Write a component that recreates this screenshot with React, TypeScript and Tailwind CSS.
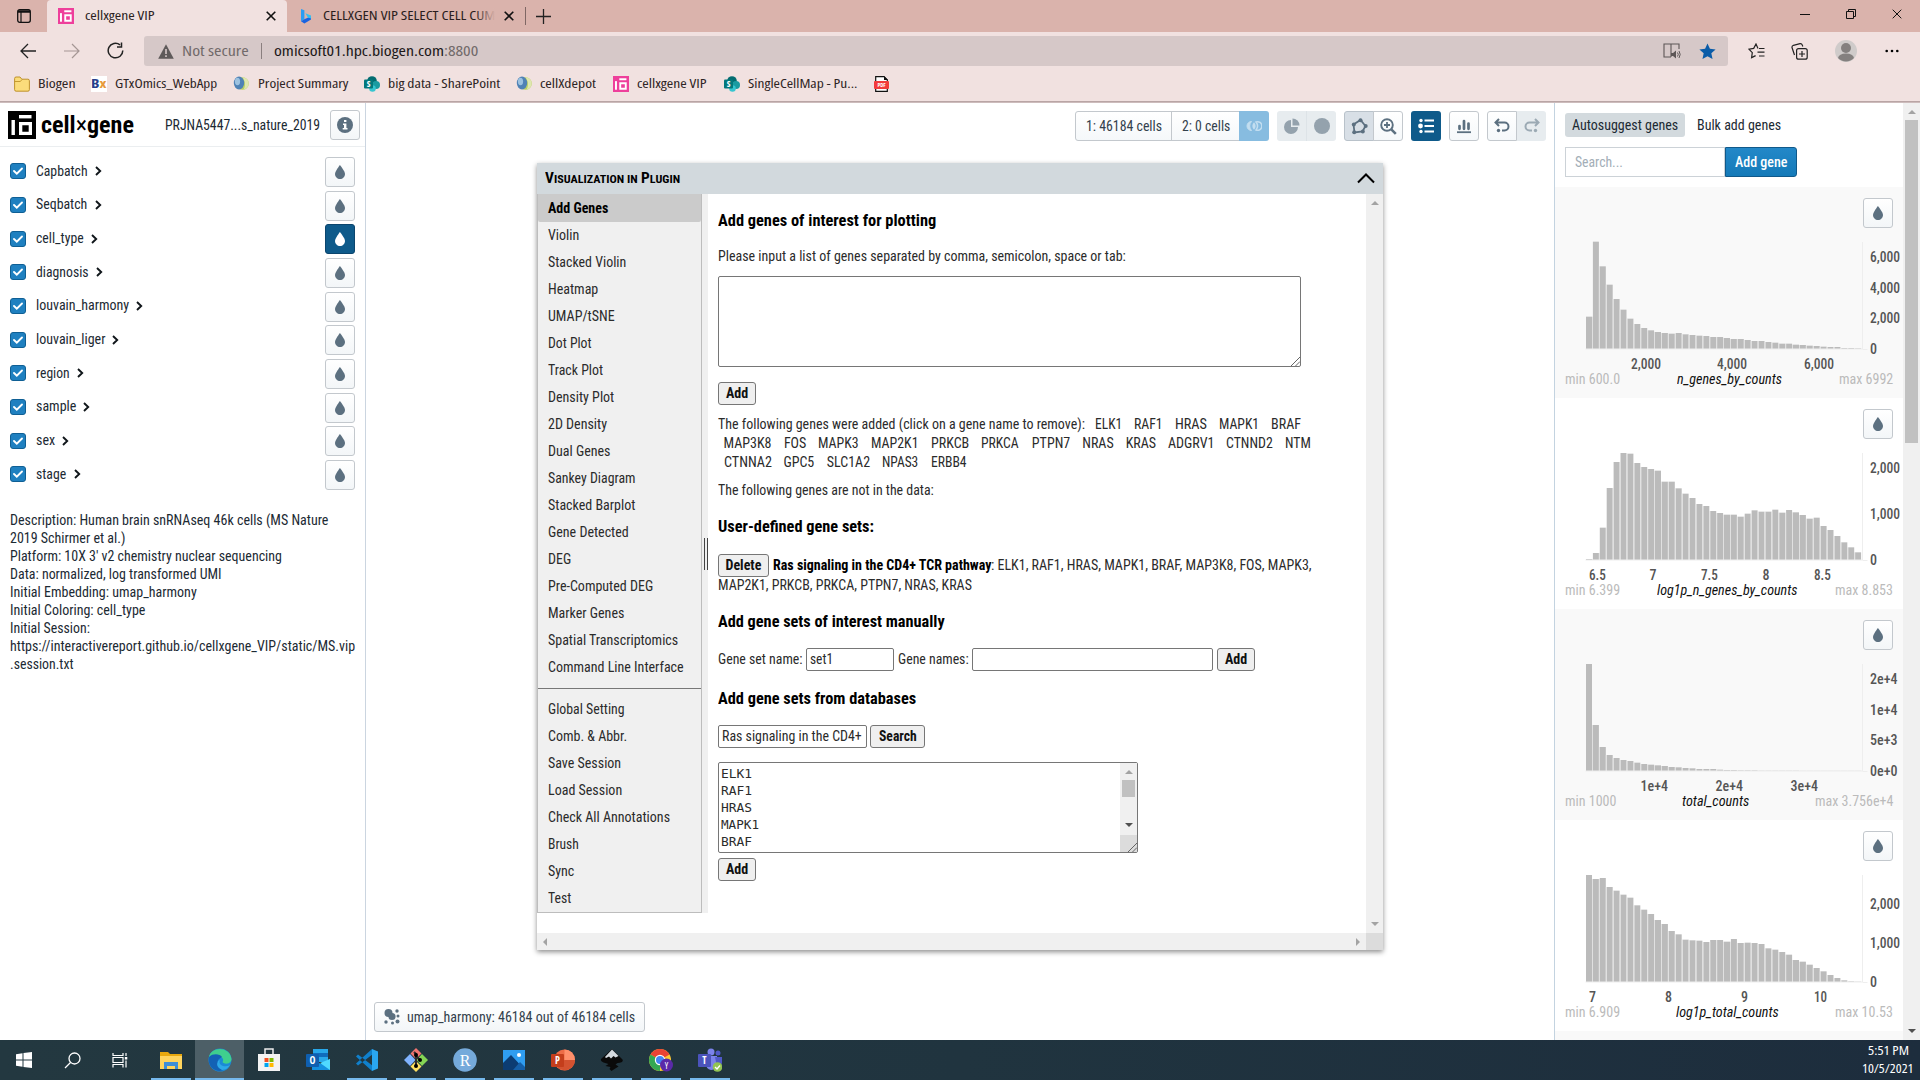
import React, { useLayoutEffect, useRef, useState } from "react";

/* Single line of condensed text that occupies an exact width. */
function T({ w, c = "", children }: { w: number; c?: string; children: React.ReactNode }) {
  const ref = useRef<HTMLSpanElement>(null);
  const [s, setS] = useState(1);
  useLayoutEffect(() => {
    if (ref.current) setS(w / ref.current.offsetWidth);
  }, [w]);
  return (
    <span className={"inline-block shrink-0 whitespace-pre " + c} style={{ width: w }}>
      <span ref={ref} className="inline-block origin-left whitespace-pre" style={{ transform: `scaleX(${s})` }}>
        {children}
      </span>
    </span>
  );
}

const ui = "font-['Open_Sans','Noto_Sans',sans-serif]";

function Logo({ size, h, bg }: { size: number; h?: number; bg: string }) {
  return (
    <svg width={size} height={h ?? size} viewBox="0 0 28 28" preserveAspectRatio="none" className="shrink-0">
      <rect width="28" height="28" fill={bg} />
      <rect x="3.5" y="9" width="3.4" height="15" fill="#fff" />
      <rect x="11" y="4" width="12.5" height="3.4" fill="#fff" />
      <path d="M11 11h13v13H11z M14.3 14.3v6.4h6.4v-6.4z" fill="#fff" fillRule="evenodd" />
    </svg>
  );
}

function Drop({ fill = "#5c7080" }: { fill?: string }) {
  return (
    <svg width="16" height="16" viewBox="0 0 16 16">
      <path fill={fill} d="M7.9 1s-4.9 6.3-4.9 8.9C3 12.7 5.3 15 8 15s5-2.3 5-5.1C13 7.2 7.9 1 7.9 1z" />
    </svg>
  );
}

const btn = "flex shrink-0 items-center justify-center rounded-[3px] border border-[#c3c8cd] bg-gradient-to-b from-white to-[#f3f6f8]";

function DropButton({ active = false }: { active?: boolean }) {
  return active ? (
    <div className="flex h-[30px] w-[30px] shrink-0 items-center justify-center rounded-[3px] border border-[#0b456d] bg-[#0e5a8a]">
      <Drop fill="#fff" />
    </div>
  ) : (
    <div className={btn + " h-[30px] w-[30px]"}>
      <Drop />
    </div>
  );
}

function Globe() {
  return (
    <svg width="16" height="16" viewBox="0 0 16 16" className="shrink-0">
      <circle cx="9.5" cy="7.5" r="6.3" fill="#b9cf62" />
      <path d="M9.5 1.2a6.3 6.3 0 0 1 1 12.5c2.500-4 1.500-9-1-12.500z" fill="#dfe7b0" />
      <ellipse cx="6" cy="7" rx="5.2" ry="6.400" fill="#4f82b5" />
      <ellipse cx="4.500" cy="5.500" rx="2.600" ry="3.800" fill="#9cc2e0" />
    </svg>
  );
}

function SharePoint() {
  return (
    <svg width="16" height="16" viewBox="0 0 16 16" className="shrink-0">
      <circle cx="8" cy="5" r="4.8" fill="#036c70" />
      <circle cx="12" cy="9" r="4" fill="#1a9ba1" />
      <circle cx="8.5" cy="12.5" r="3.3" fill="#37c6d0" />
      <rect y="3.5" width="9" height="9" rx="1" fill="#03787c" />
      <text x="4.5" y="11" fontSize="8.5" fontWeight="700" textAnchor="middle" fill="#fff" fontFamily="Open Sans, sans-serif">S</text>
    </svg>
  );
}

function XIcon({ s = 10, c = "#111", sw = 1.6 }: { s?: number; c?: string; sw?: number }) {
  return (
    <svg width={s} height={s} viewBox="0 0 10 10" className="shrink-0">
      <path d="M.7.7l8.6 8.6M9.3.7L.7 9.3" stroke={c} strokeWidth={sw} />
    </svg>
  );
}

function TitleBar() {
  return (
    <div className={"flex h-8 items-start bg-[#dab3ac] text-[12px] text-[#2a1d1d] " + ui}>
      <div className="flex h-8 w-[47px] items-center pl-[17px]">
        <svg width="14" height="14" viewBox="0 0 14 14">
          <rect x=".7" y=".7" width="12.6" height="12.6" rx="2" fill="none" stroke="#111" strokeWidth="1.3" />
          <path d="M1 2.500h12" stroke="#111" strokeWidth="2.500" />
          <path d="M4 3v10" stroke="#111" strokeWidth="1.200" />
        </svg>
      </div>
      <div className="flex h-8 w-[240px] items-center rounded-t-[4px] bg-[#f1e1e0] pl-[11px]">
        <Logo size={16} bg="#ee3f9b" />
        <T w={70} c="ml-[11px]">cellxgene VIP</T>
        <div className="ml-auto flex pr-[11px]"><XIcon /></div>
      </div>
      <div className="flex h-8 items-center pl-[13px]">
        <svg width="12" height="16" viewBox="0 0 12 16">
          <path d="M1 1l3.4 1.2v9L1 13.2z" fill="#2a9df4" />
          <path d="M1 13.2l3.4-2 6.6-3v3.2L4.4 15.4z" fill="#1b63e0" />
          <path d="M5.4 5.2L11 7.6v3L7.8 9.4z" fill="#35c0f0" />
        </svg>
        <div className="relative ml-[11px] flex">
          <T w={172}>CELLXGEN VIP SELECT CELL CUM</T>
          <div className="absolute inset-y-0 right-0 w-5 bg-gradient-to-r from-transparent to-[#dab3ac]" />
        </div>
        <div className="ml-[9px] flex"><XIcon /></div>
        <div className="ml-[11px] h-[18px] w-px bg-[#7f6764]" />
        <svg width="15" height="15" viewBox="0 0 15 15" className="ml-[10px]">
          <path d="M7.5 0v15M0 7.5h15" stroke="#222" strokeWidth="1.3" />
        </svg>
      </div>
      <div className="ml-auto flex h-7 items-center gap-9 pr-[18px]">
        <div className="h-px w-[10px] bg-[#111]" />
        <svg width="10" height="10" viewBox="0 0 10 10">
          <path d="M.5 2.5h7v7h-7zM2.5 2.5v-2h7v7h-2" fill="none" stroke="#111" />
        </svg>
        <XIcon sw={1} />
      </div>
    </div>
  );
}

function AddressRow() {
  return (
    <div className={"flex h-[38px] items-center text-[14px] " + ui}>
      <svg width="16" height="16" viewBox="0 0 16 16" className="mb-px ml-5 shrink-0">
        <path d="M16 8H1M8 1L1 8l7 7" fill="none" stroke="#222" strokeWidth="1.3" />
      </svg>
      <svg width="16" height="16" viewBox="0 0 16 16" className="mb-px ml-7 shrink-0">
        <path d="M0 8h15M8 1l7 7-7 7" fill="none" stroke="#a59694" strokeWidth="1.2" />
      </svg>
      <svg width="17" height="17" viewBox="0 0 17 17" className="mb-px ml-[27px] shrink-0">
        <path d="M15.8 8.5A7.3 7.3 0 1 1 13 2.800M14.500.500v4.500h-4.500" fill="none" stroke="#222" strokeWidth="1.5" />
      </svg>
      <div className="ml-5 flex h-[30px] w-[1584px] items-center rounded-[3px] bg-[#d6c8c8]">
        <svg width="16" height="15" viewBox="0 0 16 15" className="ml-[14px]">
          <path d="M8 .3L15.8 14.7H.2z" fill="#5f5a5a" />
          <path d="M8 5v5M8 11.3v1.6" stroke="#d6c8c8" strokeWidth="1.6" />
        </svg>
        <T w={67} c="-mt-[2px] ml-2 text-[#716a6a]">Not secure</T>
        <div className="ml-3 h-4 w-px bg-[#8a7f7f]" />
        <T w={204} c="-mt-[2px] ml-3 text-[#1b1717]">omicsoft01.hpc.biogen.com<span className="text-[#716a6a]">:8800</span></T>
        <svg width="18" height="16" viewBox="0 0 18 16" className="ml-auto">
          <path d="M8 14H1V1h15v5M8 1v13" fill="none" stroke="#5d5656" strokeWidth="1.1" />
          <path d="M8 10h2l3-2.6v8L10 13H8z" fill="#5d5656" />
          <path d="M14.5 9.5q1.5 2 0 4M16 8q2.4 3.4 0 7" fill="none" stroke="#5d5656" />
        </svg>
        <svg width="17" height="17" viewBox="0 0 24 24" className="ml-[18px] mr-[12px]">
          <path d="M12 .8l3.4 7.4 8 .9-6 5.5 1.7 8L12 18.6l-7.1 4 1.7-8-6-5.5 8-.9z" fill="#0a5ca8" />
        </svg>
      </div>
      <svg width="17" height="16" viewBox="0 0 17 16" className="ml-5 shrink-0">
        <path d="M10 5.4L8 1 5.7 5.4 1 6.2l3.3 3.4-.7 5 4-2M11 5.5h5.5M9.5 9.2h7M11 13h5.5" fill="none" stroke="#222" strokeWidth="1.2" />
      </svg>
      <svg width="17" height="17" viewBox="0 0 17 17" className="ml-[26px] shrink-0">
        <rect x="5.6" y="5.6" width="10.6" height="10.6" rx="2" fill="none" stroke="#222" strokeWidth="1.2" />
        <path d="M11 8v6M8 11h6M3.5 12L1 4.5Q.8 2.8 2.4 2.3L9 .7q1.8-.2 2.3 1.4l.5 1.4" fill="none" stroke="#222" strokeWidth="1.2" />
      </svg>
      <svg width="22" height="22" viewBox="0 0 22 22" className="ml-[27px] shrink-0">
        <circle cx="11" cy="11" r="11" fill="#cfcbca" />
        <circle cx="11" cy="8" r="5" fill="#84807f" />
        <path d="M3 18q1-4.5 8-4.5t8 4.5a11 11 0 0 1-16 0z" fill="#84807f" />
      </svg>
      <svg width="14" height="4" viewBox="0 0 14 4" className="ml-7 shrink-0">
        <circle cx="1.7" cy="2" r="1.3" /><circle cx="7" cy="2" r="1.3" /><circle cx="12.3" cy="2" r="1.3" />
      </svg>
    </div>
  );
}

function Bookmarks() {
  return (
    <div className={"flex h-8 items-center border-b border-[#b9a5a5] pb-[3px] pl-[14px] text-[12px] text-[#2d2424] " + ui}>
      <svg width="16" height="16" viewBox="0 0 16 16" className="shrink-0">
        <path d="M.6 2.5q0-1.5 1.5-1.5H6l1.8 2.2h6.1q1.5 0 1.5 1.5v9q0 1.5-1.5 1.5H2.1Q.6 15.200.6 13.700z" fill="#fbdc7b" stroke="#b98a1e" strokeWidth=".9" />
        <path d="M.8 5.500h5.500l1.700-2" fill="none" stroke="#b98a1e" strokeWidth=".8" />
      </svg>
      <T w={37} c="ml-2">Biogen</T>
      <div className="ml-4 flex h-4 w-4 items-center overflow-hidden bg-white text-[12px] font-bold leading-none text-[#27408b]">
        <T w={16}>B<span className="text-[#e79a3c]">x</span></T>
      </div>
      <T w={102} c="ml-2">GTxOmics_WebApp</T>
      <div className="ml-4 mr-[9px] flex"><Globe /></div>
      <T w={90}>Project Summary</T>
      <div className="ml-4 mr-2 flex"><SharePoint /></div>
      <T w={112}>big data - SharePoint</T>
      <div className="ml-4 mr-2 flex"><Globe /></div>
      <T w={56}>cellXdepot</T>
      <div className="ml-[17px] mr-2 flex"><Logo size={16} bg="#ee3f9b" /></div>
      <T w={70}>cellxgene VIP</T>
      <div className="ml-[17px] mr-2 flex"><SharePoint /></div>
      <T w={109}>SingleCellMap - Pu...</T>
      <svg width="15" height="16" viewBox="0 0 15 16" className="ml-[17px] shrink-0">
        <path d="M1.700.6h8.300l3.300 3.300v11.400H1.700z" fill="#fff" stroke="#111" strokeWidth="1.2" />
        <path d="M10 0v4h4z" fill="#111" />
        <rect y="5" width="15" height="8" rx="1" fill="#f23b3b" />
        <text x="7.500" y="11.200" fontSize="5.600" fontWeight="700" textAnchor="middle" fill="#fff" fontFamily="Open Sans, sans-serif">PDF</text>
      </svg>
    </div>
  );
}

const cats: [string, number][] = [
  ["Capbatch", 52], ["Seqbatch", 51.5], ["cell_type", 48], ["diagnosis", 53], ["louvain_harmony", 93],
  ["louvain_liger", 69], ["region", 34], ["sample", 40], ["sex", 19], ["stage", 30.5],
];

const desc: [string, number][] = [
  ["Description: Human brain snRNAseq 46k cells (MS Nature", 318],
  ["2019 Schirmer et al.)", 115],
  ["Platform: 10X 3' v2 chemistry nuclear sequencing", 272],
  ["Data: normalized, log transformed UMI", 212],
  ["Initial Embedding: umap_harmony", 187],
  ["Initial Coloring: cell_type", 135],
  ["Initial Session:", 80],
  ["https://interactivereport.github.io/cellxgene_VIP/static/MS.vip", 345],
  [".session.txt", 64],
];

function LeftPanel() {
  return (
    <div className="flex w-[366px] shrink-0 flex-col border-r border-[#cbd5e0] text-[14px] text-[#1c2a33]">
      <div className="flex h-[44px] items-center border-b border-[#ebeef0] pl-2">
        <Logo size={28} bg="#000" />
        <T w={93} c="ml-[5px] mt-[2px] text-[23px] font-bold leading-none text-black">cell<span className="font-normal">×</span>gene</T>
        <T w={155} c="ml-[31px] mt-[2px]">PRJNA5447...s_nature_2019</T>
        <div className={btn + " ml-[10px] mt-px h-[30px] w-[30px]"}>
          <svg width="16" height="16" viewBox="0 0 16 16">
            <circle cx="8" cy="8" r="8" fill="#5c7080" />
            <path d="M7 3h2.400v2H7zM6 6.500h3.400V11H10.500v1.500H5.700V11H7V8H6z" fill="#fff" />
          </svg>
        </div>
      </div>
      <div className="flex flex-col pt-2">
        {cats.map(([n, w]) => (
          <div key={n} className="flex h-[33.67px] items-center pb-[1px] pl-[10px] pr-[10px]">
            <div className="flex h-4 w-4 shrink-0 items-center justify-center rounded-[3px] border border-[#0f5f94] bg-[#1f80c0]">
              <svg width="12" height="12" viewBox="0 0 12 12">
                <path d="M2 6l2.800 2.700L10 3.500" fill="none" stroke="#fff" strokeWidth="1.900" strokeLinecap="round" />
              </svg>
            </div>
            <T w={w} c="ml-[10px]">{n}</T>
            <svg width="7" height="10" viewBox="0 0 7 10" className="ml-[7px]">
              <path d="M1 1l4.200 4L1 9" fill="none" stroke="#10161a" strokeWidth="1.900" />
            </svg>
            <div className="ml-auto mt-[1.5px]"><DropButton active={n === "cell_type"} /></div>
          </div>
        ))}
      </div>
      <div className="mt-[19px] flex flex-col pl-[10px] leading-[18px]">
        {desc.map(([t, w]) => <T key={t} w={w}>{t}</T>)}
      </div>
    </div>
  );
}

function Toolbar() {
  const seg = "flex h-[30px] items-center justify-center border border-[#c3c8cd] bg-gradient-to-b from-white to-[#f5f8fa]";
  return (
    <div className="flex h-[30px] items-center justify-end gap-2 pr-2 text-[14px] text-[#33414c]">
      <div className="flex">
        <div className={seg + " w-[97px] rounded-l-[3px]"}><T w={76}>1: 46184 cells</T></div>
        <div className={seg + " -ml-px w-[68px] border-r-0"}><T w={48}>2: 0 cells</T></div>
        <div className="flex h-[30px] w-[30px] items-center justify-center rounded-r-[3px] bg-[#87bce0]">
          <svg width="16" height="16" viewBox="0 0 16 16">
            <path d="M5.500 3.500a4.500 4.500 0 1 0 0 9a6.500 6.500 0 0 1 0-9z" fill="#c3def0" stroke="#c3def0" />
            <path d="M8 4.300a5 5 0 0 1 0 7.400a5 5 0 0 1 0-7.400z" fill="#c3def0" />
            <path d="M10 4a4.300 4.300 0 1 1 0 8a6.500 6.500 0 0 0 0-8z" fill="none" stroke="#c3def0" strokeWidth="1.500" />
          </svg>
        </div>
      </div>
      <div className="flex h-[30px] w-[59px] items-center rounded-[3px] bg-[#e7ecef]">
        <div className="flex w-[30px] justify-center border-r border-[#dde3e7] py-[7px]">
          <svg width="16" height="16" viewBox="0 0 16 16">
            <path d="M7 2v7h7A7 7 0 1 1 7 2z" fill="#94a2ad" />
            <path d="M8.500.500a7 7 0 0 1 7 7h-7z" fill="#94a2ad" />
          </svg>
        </div>
        <div className="flex flex-1 justify-center"><div className="h-4 w-4 rounded-full bg-[#94a2ad]" /></div>
      </div>
      <div className="flex">
        <div className="flex h-[30px] w-[30px] items-center justify-center rounded-l-[3px] border border-[#b9c2ca] bg-[#d8dfe6]">
          <svg width="17" height="17" viewBox="0 0 17 17">
            <path d="M3.500 14.500L2.500 6.500 9.500 2l5 6-3 5.500z" fill="none" stroke="#5c7080" strokeWidth="1.800" />
            <g fill="#5c7080"><circle cx="3.200" cy="14.200" r="2" /><circle cx="2.800" cy="6.500" r="2" /><circle cx="9.500" cy="2.300" r="2" /><circle cx="14.700" cy="8" r="2" /><circle cx="11.800" cy="13.500" r="2" /></g>
          </svg>
        </div>
        <div className={seg + " -ml-px w-[30px] rounded-r-[3px]"}>
          <svg width="17" height="17" viewBox="0 0 17 17">
            <circle cx="7" cy="7" r="5.800" fill="none" stroke="#5c7080" strokeWidth="1.900" />
            <path d="M11.300 11.300l4.500 4.500" stroke="#5c7080" strokeWidth="2.600" />
            <path d="M7 4v6M4 7h6" stroke="#5c7080" strokeWidth="1.800" />
          </svg>
        </div>
      </div>
      <div className="flex h-[30px] w-[30px] items-center justify-center rounded-[3px] bg-[#0e5a8a]">
        <svg width="17" height="16" viewBox="0 0 17 16">
          <path d="M6.500 2.500H16M6.500 8H16M6.500 13.500H16" stroke="#fff" strokeWidth="2" />
          <circle cx="3" cy="2.500" r="1.700" fill="#fff" /><circle cx="2.500" cy="8" r="2.400" fill="#fff" /><circle cx="3" cy="13.500" r="1.700" fill="#fff" />
        </svg>
      </div>
      <div className={seg + " w-[30px] rounded-[3px]"}>
        <svg width="16" height="16" viewBox="0 0 16 16">
          <path d="M1 14.200h14" stroke="#5c7080" strokeWidth="1.800" />
          <path d="M3.500 8v2.800M8 3v7.800M12.500 5.500v5.300" stroke="#5c7080" strokeWidth="2.700" strokeLinecap="round" />
        </svg>
      </div>
      <div className="flex">
        <div className={seg + " w-[30px] rounded-l-[3px]"}>
          <svg width="16" height="16" viewBox="0 0 16 16">
            <path d="M5 1L1.500 4.500 5 8M2 4.500h8.500a4 4 0 0 1 0 8H8" fill="none" stroke="#5c7080" strokeWidth="2" /><circle cx="4.500" cy="12.500" r="1.700" fill="#5c7080" />
          </svg>
        </div>
        <div className="flex h-[30px] w-[29px] items-center justify-center rounded-r-[3px] bg-[#e7ecef]">
          <svg width="16" height="16" viewBox="0 0 16 16">
            <path d="M11 1l3.500 3.500L11 8M14 4.500H5.500a4 4 0 0 0 0 8H8" fill="none" stroke="#9caab4" strokeWidth="2" /><circle cx="11.500" cy="12.500" r="1.700" fill="#9caab4" />
          </svg>
        </div>
      </div>
    </div>
  );
}

const menu = ["Violin", "Stacked Violin", "Heatmap", "UMAP/tSNE", "Dot Plot", "Track Plot", "Density Plot", "2D Density", "Dual Genes", "Sankey Diagram", "Stacked Barplot", "Gene Detected", "DEG", "Pre-Computed DEG", "Marker Genes", "Spatial Transcriptomics", "Command Line Interface"];
const menuW = [31, 78.5, 50, 67, 44, 55.5, 66, 59, 62, 88, 87, 81, 23, 105, 76, 130, 136];
const menu2: [string, number][] = [["Global Setting", 77], ["Comb. & Abbr.", 79], ["Save Session", 73], ["Load Session", 74], ["Check All Annotations", 122], ["Brush", 31], ["Sync", 26], ["Test", 23.5]];

function Arrow({ d, c = "#a3a3a3" }: { d: "u" | "d" | "l" | "r"; c?: string }) {
  const p = { u: "M0 6l4-4 4 4z", d: "M0 2l4 4 4-4z", l: "M6 0L2 4l4 4z", r: "M2 0l4 4-4 4z" }[d];
  return <svg width="8" height="8" viewBox="0 0 8 8" className="shrink-0"><path d={p} fill={c} /></svg>;
}

function Grip() {
  return <svg width="9" height="9" viewBox="0 0 9 9"><path d="M0 9L9 0M4.500 9L9 4.500" stroke="#666" strokeWidth="1" /></svg>;
}

function Btn({ w, tw, children }: { w: string; tw: number; children: string }) {
  return <div className={"flex h-[23px] shrink-0 items-center justify-center rounded-[3px] border border-[#767676] bg-[#efefef] font-bold text-[#111] " + w}><T w={tw}>{children}</T></div>;
}

function Genes({ list }: { list: [string, number][] }) {
  return <div className="flex gap-[12.4px]">{list.map(([g, w]) => <T key={g} w={w}>{g}</T>)}</div>;
}

const box = "flex h-[23px] shrink-0 items-center rounded-[2px] border border-[#767676] bg-white";

function Plugin() {
  return (
    <div className="ml-[171px] mt-[22px] flex h-[787px] w-[846px] flex-col bg-white text-[14px] text-[#2b2b2b] shadow-[0_2px_5px_rgba(0,0,0,0.45)]">
      <div className="flex h-[31px] shrink-0 items-center bg-[#d2d9dd] pl-2 text-black">
        <T w={135} c="font-bold">V<span className="text-[11px]">ISUALIZATION IN</span> P<span className="text-[11px]">LUGIN</span></T>
        <svg width="18" height="11" viewBox="0 0 18 11" className="ml-auto mr-2"><path d="M1 9.500L9 1.500l8 8" fill="none" stroke="#000" strokeWidth="2" /></svg>
      </div>
      <div className="flex min-h-0 flex-1">
        <div className="flex w-[829px] flex-col">
          <div className="flex h-[719px]">
            <div className="w-[165px] shrink-0 border border-t-0 border-[#bdbdbd] bg-[#f0f0f0]">
              <div className="flex h-[28px] items-center rounded-b-[2px] bg-[#cbcbcb] pl-[10px] font-bold text-black"><T w={60}>Add Genes</T></div>
              {menu.map((m, i) => <div key={m} className="flex h-[27px] items-center pl-[10px]"><T w={menuW[i]}>{m}</T></div>)}
              <div className="mb-[7px] mt-[7px] h-px bg-[#777]" />
              {menu2.map(([m, w]) => <div key={m} className="flex h-[27px] items-center pl-[10px]"><T w={w}>{m}</T></div>)}
            </div>
            <div className="flex w-[6px] shrink-0 items-center justify-between bg-[#f0f0f0] pl-[2px]">
              <div className="h-[32px] w-px bg-[#444]" /><div className="h-[32px] w-px bg-[#444]" />
            </div>
            <div className="flex flex-1 flex-col pl-[10px]">
              <T w={218} c="mt-[15px] h-6 text-[16px] font-bold leading-6 text-black">Add genes of interest for plotting</T>
              <T w={408} c="mt-[13px] h-5 leading-5">Please input a list of genes separated by comma, semicolon, space or tab:</T>
              <div className="mt-[10px] flex h-[91px] w-[583px] items-end justify-end rounded-[2px] border border-[#767676]"><Grip /></div>
              <div className="mt-[15px]"><Btn w="w-[38px]" tw={22}>Add</Btn></div>
              <div className="mt-[10px] flex flex-col leading-[19px]">
                <div className="flex"><T w={367} c="mr-[9.5px]">The following genes were added (click on a gene name to remove):</T>
                  <Genes list={[["ELK1", 27], ["RAF1", 28.5], ["HRAS", 31.5], ["MAPK1", 40], ["BRAF", 30]]} /></div>
                <div className="ml-[5.5px]"><Genes list={[["MAP3K8", 48], ["FOS", 22], ["MAPK3", 40.5], ["MAP2K1", 47.5], ["PRKCB", 38], ["PRKCA", 38], ["PTPN7", 38], ["NRAS", 31], ["KRAS", 30], ["ADGRV1", 46], ["CTNND2", 46.500], ["NTM", 25.500]]} /></div>
                <div className="ml-[5.5px]"><Genes list={[["CTNNA2", 47.500], ["GPC5", 31], ["SLC1A2", 43], ["NPAS3", 36.500], ["ERBB4", 36]]} /></div>
              </div>
              <T w={216} c="mt-[8px] h-5 leading-5">The following genes are not in the data:</T>
              <T w={156} c="mt-[15px] h-6 text-[16px] font-bold leading-6 text-black">User-defined gene sets:</T>
              <div className="mt-[15px] flex items-center"><Btn w="w-[51px]" tw={36}>Delete</Btn>
                <T w={218} c="ml-1 font-bold text-black">Ras signaling in the CD4+ TCR pathway</T>
                <T w={321}>: ELK1, RAF1, HRAS, MAPK1, BRAF, MAP3K8, FOS, MAPK3,</T></div>
              <T w={254} c="-mt-[2px] h-5 leading-5">MAP2K1, PRKCB, PRKCA, PTPN7, NRAS, KRAS</T>
              <T w={227} c="mt-[15px] h-6 text-[16px] font-bold leading-6 text-black">Add gene sets of interest manually</T>
              <div className="mt-[14px] flex items-center">
                <T w={85}>Gene set name:</T><div className={box + " ml-[3px] w-[88px] pl-[3px]"}><T w={23}>set1</T></div>
                <T w={71} c="ml-1">Gene names:</T><div className={box + " ml-[3px] mr-1 w-[241px]"} /><Btn w="w-[38px]" tw={22}>Add</Btn>
              </div>
              <T w={198} c="mt-[16px] h-6 text-[16px] font-bold leading-6 text-black">Add gene sets from databases</T>
              <div className="mt-[14px] flex gap-[3px]"><div className={box + " w-[149px] pl-[3px]"}><T w={140}>Ras signaling in the CD4+</T></div><Btn w="w-[55px]" tw={38}>Search</Btn></div>
              <div className="mt-[14px] flex h-[91px] w-[420px] justify-between rounded-[2px] border border-[#767676]">
                <div className="flex flex-col pl-[1.5px] pt-[2px] font-['DejaVu_Sans_Mono',monospace] text-[12.5px] leading-[17px]">
                  <T w={31}>ELK1</T><T w={31}>RAF1</T><T w={31}>HRAS</T><T w={38.500}>MAPK1</T><T w={31}>BRAF</T>
                </div>
                <div className="flex w-[17px] flex-col items-center bg-[#f0f0f0]">
                  <div className="flex h-[17px] items-center"><Arrow d="u" /></div>
                  <div className="h-[17px] w-[13px] bg-[#c1c1c1]" />
                  <div className="mt-auto flex h-[18px] items-start pt-1"><Arrow d="d" c="#505050" /></div>
                  <div className="flex h-[17px] w-full items-end justify-end bg-[#dcdcdc]"><Grip /></div>
                </div>
              </div>
              <div className="mt-[5px]"><Btn w="w-[38px]" tw={22}>Add</Btn></div>
            </div>
          </div>
          <div className="mt-auto flex h-[17px] items-center justify-between bg-[#f0f0f0] pl-1 pr-[4px]"><Arrow d="l" /><Arrow d="r" /></div>
        </div>
        <div className="flex flex-1 flex-col items-center justify-between bg-[#f0f0f0] pt-[5px]">
          <Arrow d="u" />
          <div className="flex w-full flex-col items-center gap-[5px]"><Arrow d="d" /><div className="h-[17px] w-full bg-[#dcdcdc]" /></div>
        </div>
      </div>
    </div>
  );
}

type Hist = { name: string; nw: number; nx: number; min: string; minW: number; max: string; maxW: number; base: number; tops: number[]; y: [string, number, number][]; x: [string, number, number][] };

const hists: Hist[] = [
  { name: "n_genes_by_counts", nw: 105, nx: 57, min: "min 600.0", minW: 55, max: "max 6992", maxW: 54, base: 477,
    tops: [380,155,229,284,327,359,386,402,414,421,426,429,431,429,433,435,437,438,441,441,444,447,447,450,453,453,456,458,461,461,464,465,467,468,470,471,471,474,474,475],
    y: [["6,000", 70, 30], ["4,000", 101, 30], ["2,000", 131, 30], ["0", 162, 7]], x: [["2,000", 91, 30], ["4,000", 177, 30], ["6,000", 264, 30]] },
  { name: "log1p_n_genes_by_counts", nw: 141, nx: 37, min: "min 6.399", minW: 55, max: "max 8.853", maxW: 58, base: 1110,
    tops: [1107,1089,1013,894,816,789,791,819,831,837,842,875,875,895,911,924,942,948,963,969,974,974,980,971,961,965,965,959,968,960,967,975,986,983,1008,1020,1038,1057,1072,1087],
    y: [["2,000", 70, 30], ["1,000", 116, 30], ["0", 162, 7]], x: [["6.5", 42, 17], ["7", 98, 7], ["7.5", 154, 17], ["8", 211, 7], ["8.5", 267, 17]] },
  { name: "total_counts", nw: 67, nx: 66, min: "min 1000", minW: 51, max: "max 3.756e+4", maxW: 78, base: 483,
    tops: [162,345,411,435,444,450,453,458,462,464,466,468,471,472,474,475,477,477,477,479,480,480,481,481,481,482,482,482,482,482,482,482.5,482.5,482.5,482.5,482.5,482.5,482.5,482.5,482.5],
    y: [["2e+4", 70, 27], ["1e+4", 101, 27], ["5e+3", 131, 27], ["0e+0", 162, 27]], x: [["1e+4", 99, 27], ["2e+4", 174, 27], ["3e+4", 249, 27]] },
  { name: "log1p_total_counts", nw: 103, nx: 56, min: "min 6.909", minW: 55, max: "max 10.53", maxW: 58, base: 1116,
    tops: [795,807,804,831,842,854,863,886,899,912,930,942,963,973,989,991,992,996,990,990,995,987,999,998,999,1002,1015,1019,1026,1034,1050,1055,1064,1074,1084,1095,1104,1111,1114,1115],
    y: [["2,000", 84, 30], ["1,000", 123, 30], ["0", 162, 7]], x: [["7", 37.5, 7], ["8", 113.5, 7], ["9", 189.5, 7], ["10", 265.5, 13]] },
];

function Histogram({ h, shade }: { h: Hist; shade: boolean }) {
  return (
    <div className={"h-[211px] " + (shade ? "bg-[#f9f9f9]" : "bg-white")}>
      <div className="flex h-[41px] justify-end pr-[10px] pt-[11px]"><DropButton /></div>
      <div className="relative h-[142px]">
        <svg width="348" height="142" className="block">
          {h.tops.map((t, i) => <rect key={i} x={31 + i * 6.9} y={121 - (h.base - t) / 3} width="6" height={(h.base - t) / 3} fill="#bbb" />)}
          {h.tops.map((t, i) => i < 39 && <rect key={i} x={37 + i * 6.9} y={121 - (h.base - Math.max(t, h.tops[i + 1])) / 3} width=".9" height={(h.base - Math.max(t, h.tops[i + 1])) / 3} fill="#ddd" />)}
          <path d="M307.500 14v107h-277M307.500 121.500h5" fill="none" stroke="#eee" strokeWidth="1" />
        </svg>
        {h.y.map(([t, y, w]) => <div key={t} className="absolute left-[315px] flex h-5 items-center font-medium text-[#555]" style={{ top: y - 50.5 }}><T w={w}>{t}</T></div>)}
        {h.x.map(([t, x, w]) => <div key={t} className="absolute top-[126px] flex h-5 items-center font-medium text-[#555]" style={{ left: x - w / 2 }}><T w={w}>{t}</T></div>)}
      </div>
      <div className="flex h-[18px] items-center pl-[10px] pr-[10px] text-[#bbb]">
        <T w={h.minW}>{h.min}</T>
        <span className="flex italic text-[#111]" style={{ marginLeft: h.nx }}><T w={h.nw}>{h.name}</T></span>
        <T w={h.maxW} c="ml-auto">{h.max}</T>
      </div>
    </div>
  );
}

function RightPanel() {
  return (
    <div className="flex w-[366px] shrink-0 border-l border-[#c3d3e0] text-[14px]">
      <div className="flex w-[348px] flex-col overflow-hidden">
        <div className="ml-[10px] mt-[10px] flex h-6 items-center text-[#1c2a33]">
          <div className="flex h-6 w-[120px] items-center justify-center rounded-[3px] bg-[#d3dade]"><T w={106}>Autosuggest genes</T></div>
          <T w={84} c="ml-3">Bulk add genes</T>
        </div>
        <div className="mb-[10px] ml-[10px] mt-[10px] flex h-[30px]">
          <div className="flex w-[160px] items-center border border-[#ccd2d7] pl-[9px] text-[#a3aeb7]"><T w={48}>Search...</T></div>
          <div className="flex w-[72px] items-center justify-center rounded-r-[3px] border border-[#10598a] bg-gradient-to-b from-[#2388c8] to-[#147ab8] font-medium text-white"><T w={52}>Add gene</T></div>
        </div>
        {hists.map((h, i) => <Histogram key={h.name} h={h} shade={i % 2 === 0} />)}
        <div className="flex-1 bg-[#f9f9f9]" />
      </div>
      <div className="flex w-[17px] flex-col items-center bg-[#f0f0f0] py-[5px]">
        <Arrow d="u" />
        <div className="mb-auto mt-1 h-[323px] w-[13px] bg-[#c1c1c1]" />
        <Arrow d="d" c="#505050" />
      </div>
    </div>
  );
}

function Square({ c, l }: { c: string; l: string }) {
  return <g><rect x="0" y="6" width="13" height="13" rx="1" fill={c} /><text x="6.500" y="16" fontSize="10" fontWeight="700" textAnchor="middle" fill="#fff" fontFamily="Open Sans, sans-serif">{l}</text></g>;
}

const apps: { id: string; open: boolean; el: React.ReactNode }[] = [
  { id: "files", open: true, el: <g><path d="M1 4h8l2 2h12v15H1z" fill="#e8a80e" /><path d="M1 8h22v13H1z" fill="#ffd45e" /><path d="M5 14h14v7h-3v-3H8v3H5z" fill="#3e8ed8" /></g> },
  { id: "edge", open: true, el: <g><circle cx="12" cy="12" r="11.500" fill="#1b8ad6" /><path d="M1 9C3-2 22-2 23.500 11c0 5-7 6-9 3 2-3-1-6-5-6-4 0-7 1-8.500 1z" fill="#3fcf8e" /><path d="M1 9c4-4 11-3 13 0l-3 2c-3 3-1 9 6 10.500C8 26-1 19 1 9z" fill="#1362b5" /><path d="M12 12q-2 4 3 6 4 1 7-1-3 5-8 5-7-3-4-9z" fill="#2ea9e8" /></g> },
  { id: "store", open: false, el: <g><path d="M8 6V1h8v5" fill="none" stroke="#eee" strokeWidth="1.500" /><path d="M1 6h22v17H1z" fill="#f3f3f3" /><path d="M7.500 10h4v4h-4z" fill="#f25022" /><path d="M12.500 10h4v4h-4z" fill="#7fba00" /><path d="M7.500 15h4v4h-4z" fill="#00a4ef" /><path d="M12.500 15h4v4h-4z" fill="#ffb900" /></g> },
  { id: "outlook", open: false, el: <g><path d="M7 1h15v13H7z" fill="#28a8ea" /><path d="M7 5h15v4H7z" fill="#0f6cbd" /><path d="M6 11l9 5 9-5v11H6z" fill="#1490df" /><path d="M24 11v11L14 15z" fill="#50d9ff" /><Square c="#0f5fb0" l="O" /></g> },
  { id: "code", open: true, el: <g><path d="M17 1L1 15.500l2 2L18 6zM17 23L1 8.500l2-2L18 18z" fill="#1080cc" /><path d="M17 1l6 2.500v17L17 23z" fill="#2aa7f2" /></g> },
  { id: "git", open: true, el: <g><path d="M12 0l5.500 5.500L12 11 6.500 5.500z" fill="#f07470" /><path d="M6 6l5.500 6L6 18l-6-6z" fill="#80b3ff" /><path d="M18 6l6 6-6 6-5.500-6z" fill="#85d555" /><path d="M12 13l5.500 5.500L12 24l-5.500-5.500z" fill="#ffe060" /><path d="M10 4l2 2v13M12 8l4 4" stroke="#332c2c" strokeWidth="2" fill="none" /><circle cx="12" cy="7" r="2" /><circle cx="16" cy="12" r="2" /><circle cx="12" cy="18" r="2" /></g> },
  { id: "r", open: true, el: <g><circle cx="12" cy="12" r="11.800" fill="#75aadb" /><text x="12" y="17.500" fontSize="16" textAnchor="middle" fill="#fff" fontFamily="Liberation Serif, serif">R</text></g> },
  { id: "photos", open: true, el: <g><path d="M1 2h22v20H1z" fill="#2f9df0" /><path d="M1 15l8-8 14 15H1z" fill="#0c3c72" /><path d="M11 22l7-8 5 5v3z" fill="#155fa8" /><circle cx="17" cy="7" r="2" fill="#fff" /></g> },
  { id: "ppt", open: true, el: <g><circle cx="13.500" cy="12" r="10.500" fill="#ed6c47" /><path d="M13.500 1.500A10.500 10.500 0 0 1 24 12H13.500z" fill="#ff8f6b" /><path d="M24 12a10.500 10.500 0 0 1-18 7l7.500-7z" fill="#d35230" /><Square c="#c43e1c" l="P" /></g> },
  { id: "ink", open: true, el: <g><path d="M12 1l10.500 10.500q1.500 3-5 3.500l-2 1.500 3 2-4 2.500-3 2-2-2 1-2-5-1 3-2-5-1.500q-4-1.500-2-4z" fill="#0a0a0a" /><path d="M12 1.500l6.500 6.500-3 1.500-2-1.500-2.500 2.500-2-2-3 1.500-1-1z" fill="#d5dbe0" /></g> },
  { id: "chrome", open: true, el: <g><circle cx="11" cy="12" r="11" fill="#fcc934" /><path d="M11 12L1.500 6.500a11 11 0 0 1 19 0z" fill="#ea4335" /><path d="M11 12L1.500 6.500A11 11 0 0 0 11 23z" fill="#34a853" /><circle cx="11" cy="12" r="5.200" fill="#fff" /><circle cx="11" cy="12" r="4" fill="#4285f4" /><circle cx="17.500" cy="17" r="6.500" fill="#5a2aa8" /><text x="17.500" y="20.500" fontSize="9" textAnchor="middle" fill="#fff" fontFamily="Open Sans, sans-serif">Y</text></g> },
  { id: "teams", open: true, el: <g><circle cx="13" cy="4" r="3.500" fill="#7b83eb" /><circle cx="20" cy="5" r="2.500" fill="#5059c9" /><path d="M8 8h11v9q-2 5-6 5-5-1-5-6z" fill="#7b83eb" /><path d="M17 9h7v6q-1 4-5 4z" fill="#5059c9" /><Square c="#4b53bc" l="T" /><circle cx="19.500" cy="19" r="4.800" fill="#92c353" /><path d="M17 19l2 2 3-3.500" stroke="#fff" strokeWidth="1.300" fill="none" /></g> },
];

function Taskbar() {
  return (
    <div className={"flex h-10 items-center bg-gradient-to-r from-[#233840] via-[#20343f] to-[#1d2d3d] text-[12px] text-white " + ui}>
      <svg width="16" height="16" viewBox="0 0 16 16" className="ml-4"><path d="M0 2.200L6.500 1.300v6.200H0zM7.500 1.100L16 0v7.500H7.500zM0 8.500h6.500v6.200L0 13.800zM7.500 8.500H16V16l-8.500-1.100z" fill="#fff" /></svg>
      <svg width="17" height="17" viewBox="0 0 17 17" className="ml-[32px]"><circle cx="10.500" cy="6.500" r="5.500" fill="none" stroke="#fff" strokeWidth="1.300" /><path d="M6.500 10.500L1 16" stroke="#fff" strokeWidth="1.300" /></svg>
      <svg width="16" height="16" viewBox="0 0 16 16" className="ml-[31px] mr-[18px]"><path d="M1 1v2.500h10V1M1 5.500h10v5H1zM1 15.500V12.500h10v3M14 1v3M14 8.500V15.500" fill="none" stroke="#fff" strokeWidth="1.200" /><path d="M12.800 5h2.500v2.500h-2.500z" fill="#fff" /></svg>
      {apps.map((a) => (
        <div key={a.id} className={"flex h-10 w-[49px] flex-col items-center " + (a.id === "edge" ? "bg-[#4d5f67]" : "")}>
          <svg width="24" height="24" viewBox="0 0 24 24" className="mb-auto mt-2">{a.el}</svg>
          {a.open && <div className={"h-[2px] bg-[#76b9ed] " + (a.id === "edge" ? "w-full" : "w-10")} />}
        </div>
      ))}
      <div className="ml-auto flex flex-col items-center pr-[6px] leading-[18px]"><T w={41}>5:51 PM</T><T w={52}>10/5/2021</T></div>
    </div>
  );
}

export default function App() {
  return (
    <div className="flex h-[1080px] w-[1920px] flex-col overflow-hidden bg-white font-['Roboto_Condensed','Roboto',sans-serif] [font-stretch:75%]">
      <TitleBar />
      <div className="h-[70px] shrink-0 bg-[#f1e1e0]">
        <AddressRow />
        <Bookmarks />
      </div>
      <div className="flex h-[938px] shrink-0 border-t border-[#cdbcbc]">
        <LeftPanel />
        <div className="flex flex-1 flex-col pt-2">
          <Toolbar />
          <Plugin />
          <div className={btn + " mb-2 ml-2 mt-auto h-[30px] w-[271px] text-[14px] text-[#33414c]"}>
            <svg width="16" height="16" viewBox="0 0 16 16" className="mr-[7px]"><g fill="#5c7080"><circle cx="4.500" cy="4" r="4" /><circle cx="8" cy="7.500" r="3.600" /><circle cx="13" cy="2" r="1.700" /><circle cx="14" cy="7" r="1.500" /><circle cx="2" cy="13" r="1.700" /><circle cx="8.500" cy="14" r="1.500" /><circle cx="13.500" cy="12.500" r="2" /></g></svg>
            <T w={228}>umap_harmony: 46184 out of 46184 cells</T>
          </div>
        </div>
        <RightPanel />
      </div>
      <Taskbar />
    </div>
  );
}
